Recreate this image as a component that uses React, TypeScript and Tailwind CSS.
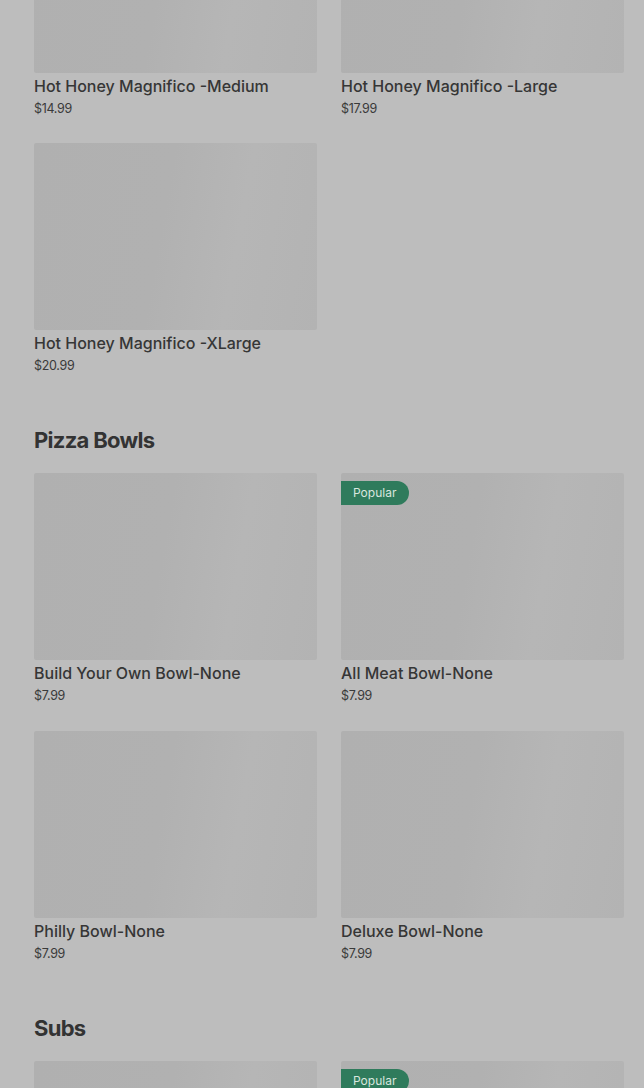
import React from "react";

type Item = { name?: string; price?: string; popular?: boolean };

const sections: { title?: string; items: Item[] }[] = [
  {
    items: [
      { name: "Hot Honey Magnifico -Medium", price: "$14.99" },
      { name: "Hot Honey Magnifico -Large", price: "$17.99" },
      { name: "Hot Honey Magnifico -XLarge", price: "$20.99" },
    ],
  },
  {
    title: "Pizza Bowls",
    items: [
      { name: "Build Your Own Bowl-None", price: "$7.99" },
      { name: "All Meat Bowl-None", price: "$7.99", popular: true },
      { name: "Philly Bowl-None", price: "$7.99" },
      { name: "Deluxe Bowl-None", price: "$7.99" },
    ],
  },
  {
    title: "Subs",
    items: [{}, { popular: true }],
  },
];

function Card({ item }: { item: Item }) {
  return (
    <div className="flex flex-col">
      <div className="relative h-[187px] rounded-[2px] bg-[linear-gradient(100deg,#b0b0b0_0%,#b1b1b1_45%,#b6b6b6_70%,#b3b3b3_100%)]">
        {item.popular && (
          <div className="absolute left-0 top-[8px] flex h-[24px] w-[68px] items-center rounded-r-full bg-[#2f7b5c] pl-[12px] text-[12px] leading-none text-[#d9e6df]">
            Popular
          </div>
        )}
      </div>
      {item.name && (
        <>
          <div className="mt-[3px] text-[16px] font-medium leading-[20px] text-[#363636] whitespace-nowrap">
            {item.name}
          </div>
          <div className="mt-[5px] text-[12.5px] leading-[16px] tracking-[-0.3px] text-[#3a3a3a]">
            {item.price}
          </div>
        </>
      )}
    </div>
  );
}

export default function App() {
  return (
    <div
      className="h-[1088px] overflow-hidden bg-[#bdbdbd]"
      style={{ fontFamily: "Inter, 'Liberation Sans', sans-serif" }}
    >
      <div className="mt-[-114px] ml-[34px] w-[590px]">
        {sections.map((s, i) => (
          <div key={i}>
            {s.title && (
              <h2 className="mt-[52px] mb-[19px] text-[22px] font-bold leading-[28px] tracking-[-0.7px] text-[#333333]">
                {s.title}
              </h2>
            )}
            <div
              className={
                i === 0
                  ? "grid grid-cols-2 gap-x-[24px] gap-y-[26px]"
                  : "grid grid-cols-2 gap-x-[24px] gap-y-[27px]"
              }
            >
              {s.items.map((it, j) => (
                <Card key={j} item={it} />
              ))}
            </div>
          </div>
        ))}
      </div>
    </div>
  );
}
